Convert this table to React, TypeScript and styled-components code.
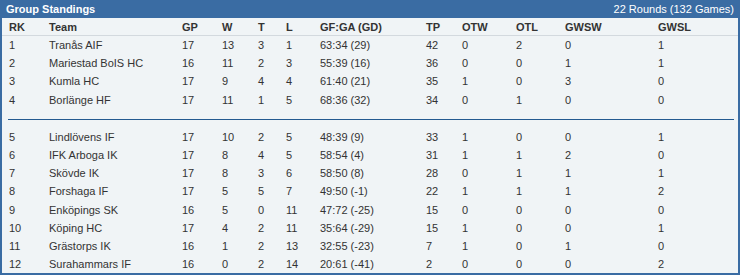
import { createGlobalStyle, styled } from 'styled-components';

type Row = [number, string, number, number, number, number, string, number, number, number, number, number];

const topRows: Row[] = [
  [1, 'Tranås AIF', 17, 13, 3, 1, '63:34 (29)', 42, 0, 2, 0, 1],
  [2, 'Mariestad BoIS HC', 16, 11, 2, 3, '55:39 (16)', 36, 0, 0, 1, 1],
  [3, 'Kumla HC', 17, 9, 4, 4, '61:40 (21)', 35, 1, 0, 3, 0],
  [4, 'Borlänge HF', 17, 11, 1, 5, '68:36 (32)', 34, 0, 1, 0, 0],
];

const bottomRows: Row[] = [
  [5, 'Lindlövens IF', 17, 10, 2, 5, '48:39 (9)', 33, 1, 0, 0, 1],
  [6, 'IFK Arboga IK', 17, 8, 4, 5, '58:54 (4)', 31, 1, 1, 2, 0],
  [7, 'Skövde IK', 17, 8, 3, 6, '58:50 (8)', 28, 0, 1, 1, 1],
  [8, 'Forshaga IF', 17, 5, 5, 7, '49:50 (-1)', 22, 1, 1, 1, 2],
  [9, 'Enköpings SK', 16, 5, 0, 11, '47:72 (-25)', 15, 0, 0, 0, 0],
  [10, 'Köping HC', 17, 4, 2, 11, '35:64 (-29)', 15, 1, 0, 0, 1],
  [11, 'Grästorps IK', 16, 1, 2, 13, '32:55 (-23)', 7, 1, 0, 1, 0],
  [12, 'Surahammars IF', 16, 0, 2, 14, '20:61 (-41)', 2, 0, 0, 0, 2],
];

const columns = ['RK', 'Team', 'GP', 'W', 'T', 'L', 'GF:GA (GD)', 'TP', 'OTW', 'OTL', 'GWSW', 'GWSL'];

const GlobalStyle = createGlobalStyle`
  html, body {
    margin: 0;
    padding: 0;
    background: #ffffff;
  }
  body {
    font-family: 'Liberation Sans', Arial, sans-serif;
  }
`;

const Panel = styled.section`
  width: 740px;
  height: 275px;
  box-sizing: border-box;
  border: 2px solid #3a6ca3;
  border-top: none;
  background: #f0f4f6;
  font-size: 11px;
  color: #333333;
`;

const TitleBar = styled.header`
  height: 18px;
  margin: 0 -2px;
  padding: 0 6px;
  display: flex;
  align-items: center;
  justify-content: space-between;
  background: #3a6ca3;
  color: #ffffff;
`;

const Title = styled.h2`
  margin: 0;
  font-size: 11px;
  font-weight: bold;
`;

const Rounds = styled.span`
  font-size: 11px;
`;

const Grid = styled.div`
  display: grid;
  grid-template-columns: 40px 133px 40px 36px 28px 34px 106px 36px 54px 49px 93px 1fr;
  padding: 0 4px 0 7px;
`;

const HeadRow = styled(Grid)`
  height: 17px;
  align-items: center;
  border-bottom: 1px solid #d3d9de;
  font-weight: bold;
`;

const BodyRow = styled(Grid)`
  height: 18.2px;
  align-items: center;
`;

const Divider = styled.hr`
  margin: 10px 4px 8px 6px;
  border: none;
  border-top: 1px solid #245a90;
`;

const Cell = styled.span`
  white-space: nowrap;
`;

const StandingRow = ({ row }: { row: Row }) => (
  <BodyRow>
    {row.map((value, i) => (
      <Cell key={i}>{value}</Cell>
    ))}
  </BodyRow>
);

const App = () => {
  return (
    <>
      <GlobalStyle />
      <Panel>
        <TitleBar>
          <Title>Group Standings</Title>
          <Rounds>22 Rounds (132 Games)</Rounds>
        </TitleBar>
        <HeadRow>
          {columns.map(c => (
            <Cell key={c}>{c}</Cell>
          ))}
        </HeadRow>
        <div>
          {topRows.map(r => (
            <StandingRow key={r[0]} row={r} />
          ))}
        </div>
        <Divider />
        <div>
          {bottomRows.map(r => (
            <StandingRow key={r[0]} row={r} />
          ))}
        </div>
      </Panel>
    </>
  );
};

export default App;
